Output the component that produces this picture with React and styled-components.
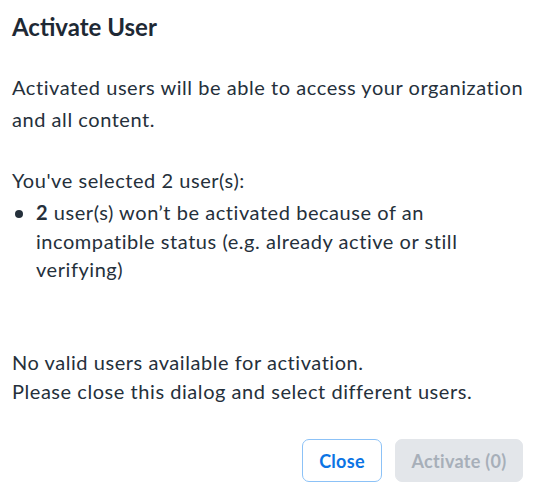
import React from "react";
import styled, { createGlobalStyle } from "styled-components";

const Global = createGlobalStyle`
  html, body { margin: 0; padding: 0; background: #ffffff; }
  body { font-family: Lato, "Noto Sans", sans-serif; }
`;

const Dialog = styled.div`
  width: 538px;
  height: 497px;
  box-sizing: border-box;
  padding: 11px 2px 0 12px;
  display: flex;
  flex-direction: column;
  color: #25303b;
`;

const Title = styled.h2`
  margin: 0;
  font-size: 24px;
  line-height: 32px;
  font-weight: 700;
  color: #1e2935;
`;

const Para = styled.p`
  margin: ${(p) => p.$mt || 0}px 0 0 0;
  font-size: 20px;
  letter-spacing: 0.55px;
  line-height: ${(p) => p.$lh || 28.5}px;
`;

const List = styled.ul`
  list-style: none;
  margin: 3.2px 13px 0 0;
  padding: 0;
`;

const Item = styled.li`
  display: flex;
  align-items: flex-start;
  font-size: 20px;
  letter-spacing: 0.55px;
  line-height: 28.5px;
`;

const Dot = styled.span`
  flex: none;
  width: 8px;
  height: 8px;
  border-radius: 50%;
  background: #25303b;
  margin: 12px 13px 0 3px;
`;

const Footer = styled.div`
  margin: 34.3px 13px 0 0;
  display: flex;
  justify-content: flex-end;
  gap: 13px;
`;

const Button = styled.button`
  height: 43px;
  box-sizing: border-box;
  border-radius: 7px;
  font-family: Lato, "Noto Sans", sans-serif;
  font-weight: 700;
  font-size: 18px;
  letter-spacing: 0.3px;
  padding: 0;
  width: ${(p) => p.$w}px;
  border: 1px solid ${(p) => (p.$primary ? "#e3e6ea" : "#8cc2f7")};
  background: ${(p) => (p.$primary ? "#e3e6ea" : "#ffffff")};
  color: ${(p) => (p.$primary ? "#a7afb9" : "#0b74e4")};
  cursor: ${(p) => (p.disabled ? "default" : "pointer")};
`;

export default function App() {
  return (
    <>
      <Global />
      <Dialog>
        <Title>Activate User</Title>
        <Para $mt={29.2} $lh={31.6}>
          Activated users will be able to access your organization and all content.
        </Para>
        <Para $mt={31}>You've selected 2 user(s):</Para>
        <List>
          <Item>
            <Dot />
            <span>
              <b>2</b> user(s) won’t be activated because of an incompatible status (e.g. already active or still verifying)
            </span>
          </Item>
        </List>
        <Para $mt={64.5}>
          No valid users available for activation.
          <br />
          Please close this dialog and select different users.
        </Para>
        <Footer>
          <Button $w={80}>Close</Button>
          <Button $w={128} $primary disabled>
            Activate (0)
          </Button>
        </Footer>
      </Dialog>
    </>
  );
}
